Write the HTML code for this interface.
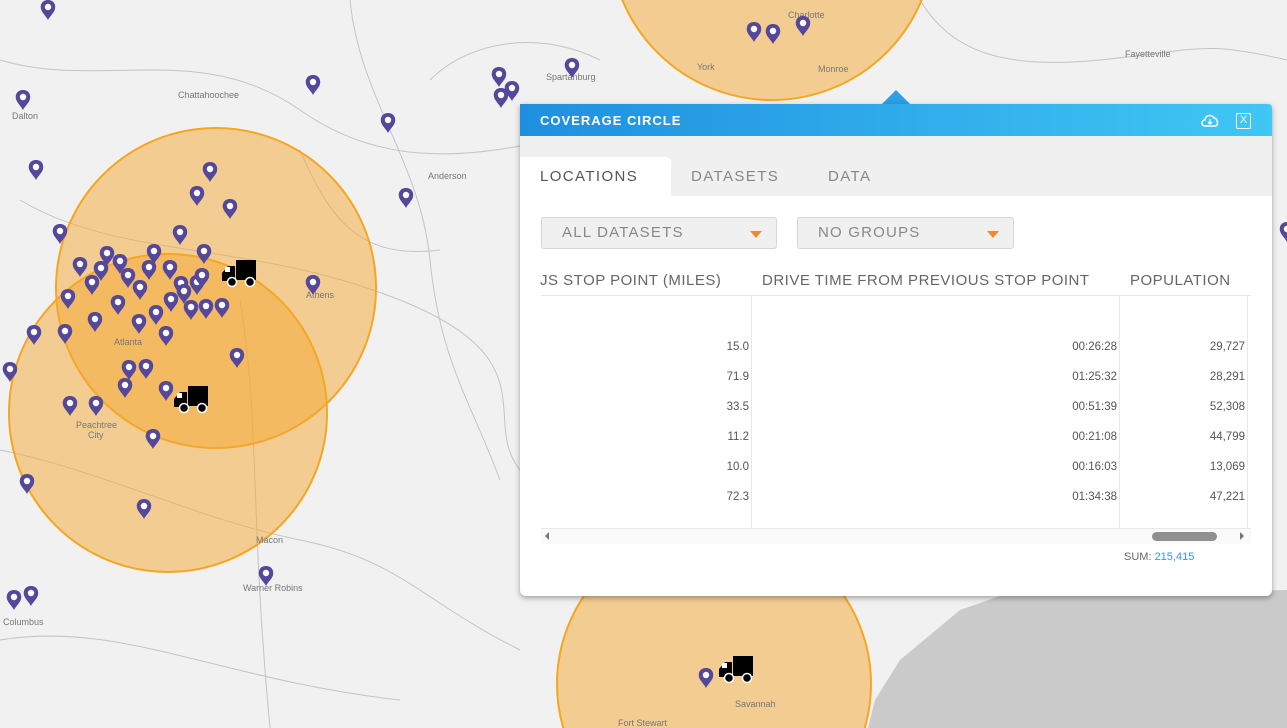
<!DOCTYPE html>
<html><head><meta charset="utf-8"><style>
*{margin:0;padding:0;box-sizing:border-box}
html,body{width:1287px;height:728px;overflow:hidden}
body{font-family:"Liberation Sans",sans-serif;background:#f1f1f1;position:relative}
#map{position:absolute;left:0;top:0;display:block}
.panel{position:absolute;left:520px;top:104px;width:752px;height:492px;background:#fff;border-radius:0 4px 6px 6px;box-shadow:0 2px 6px rgba(0,0,0,.35);overflow:hidden}
.hdr{height:32px;background:linear-gradient(90deg,#1f8fe0,#40c7f4);color:#fff;font-weight:bold;font-size:13px;letter-spacing:1px;line-height:33px;padding-left:20px;position:relative}
.tabs{height:60px;background:#f0f0f0;position:relative}
.tab{position:absolute;top:21px;height:40px;line-height:40px;font-size:15px;letter-spacing:1.4px;color:#888}
.tab.act{left:0;width:151px;background:#fff;color:#555;padding-left:20px;border-radius:0 6px 0 0}
.sel{position:absolute;top:113px;height:32px;background:#f0f0f0;border:1px solid #d6d6d6;border-radius:3px;font-size:15px;letter-spacing:1.2px;color:#888;line-height:30px;padding-left:20px}
.sel:after{content:"";position:absolute;right:14px;top:13px;border-left:6px solid transparent;border-right:6px solid transparent;border-top:7px solid #f08a24}
.th{position:absolute;top:168px;font-size:15px;letter-spacing:.5px;color:#666}
.vl{position:absolute;top:192px;width:1px;height:232px;background:#e8e8e8}
.num{position:absolute;font-size:11.5px;color:#555;text-align:right}
</style></head><body>
<svg id="map" width="1287" height="728" viewBox="0 0 1287 728">
<defs>
<g id="pin"><path d="M0 -18 C-6 -18 -8 -13 -7 -9 C-6 -5 -2 -2 0 2 C2 -2 6 -5 7 -9 C8 -13 6 -18 0 -18Z" fill="#55489a"/><circle cx="0" cy="-11" r="3.2" fill="#fff"/></g>
<g id="truck"><rect x="-16" y="-12" width="20" height="20" fill="#000"/><path d="M-17 -6 h-7 l-6 7 v8 h13z" fill="#000"/><rect x="-27" y="-5" width="5" height="5" fill="#fff"/><circle cx="-20" cy="10" r="4.5" fill="#000" stroke="#fff" stroke-width="1.5"/><circle cx="-2" cy="10" r="4.5" fill="#000" stroke="#fff" stroke-width="1.5"/></g>
</defs>
<rect width="1287" height="728" fill="#f1f1f1"/>
<path d="M1287 590 L1000 596 L960 610 L900 660 L875 700 L868 728 L1287 728Z" fill="#cacaca"/>
<g stroke="#c4c4c4" stroke-width="1" fill="none">
<path d="M0 60 C100 90 200 40 300 110 S500 150 600 130"/>
<path d="M20 200 C120 260 250 240 400 300 S480 420 520 470"/>
<path d="M350 0 C360 100 420 160 430 260 S470 400 500 480"/>
<path d="M0 450 C100 470 200 520 300 540 S420 600 520 650"/>
<path d="M240 300 C260 420 250 520 270 728"/>
<path d="M0 640 C120 620 220 680 400 700"/>
<path d="M430 80 C470 40 540 30 600 60"/>
<path d="M920 0 C950 50 1000 70 1100 60 S1200 40 1287 60"/>
<path d="M300 150 C330 220 360 260 440 250"/>
</g>
<g fill="rgba(244,168,50,0.5)" stroke="#f5a623" stroke-width="2">
<circle cx="772" cy="-62" r="162"/>
<circle cx="216" cy="288" r="160"/>
<circle cx="168" cy="413" r="159"/>
<circle cx="714" cy="684" r="157"/>
</g>
<g font-size="9" fill="#777" font-family="Liberation Sans">
<text x="12" y="119">Dalton</text><text x="428" y="179">Anderson</text><text x="1125" y="57">Fayetteville</text><text x="788" y="18">Charlotte</text><text x="818" y="72">Monroe</text><text x="697" y="70">York</text><text x="114" y="345">Atlanta</text><text x="306" y="298">Athens</text><text x="256" y="543">Macon</text><text x="243" y="591">Warner Robins</text><text x="3" y="625">Columbus</text><text x="735" y="707">Savannah</text><text x="618" y="726">Fort Stewart</text><text x="546" y="80">Spartanburg</text><text x="178" y="98">Chattahoochee</text><text x="76" y="428">Peachtree</text><text x="88" y="438">City</text>
</g>
<g>
<use href="#pin" x="48" y="18"/><use href="#pin" x="23" y="108"/><use href="#pin" x="313" y="93"/><use href="#pin" x="388" y="131"/><use href="#pin" x="36" y="178"/><use href="#pin" x="406" y="206"/><use href="#pin" x="499" y="85"/><use href="#pin" x="512" y="99"/><use href="#pin" x="501" y="106"/><use href="#pin" x="572" y="76"/><use href="#pin" x="754" y="40"/><use href="#pin" x="773" y="42"/><use href="#pin" x="803" y="34"/><use href="#pin" x="210" y="180"/><use href="#pin" x="197" y="204"/><use href="#pin" x="230" y="217"/><use href="#pin" x="180" y="243"/><use href="#pin" x="60" y="242"/><use href="#pin" x="107" y="264"/><use href="#pin" x="154" y="262"/><use href="#pin" x="204" y="262"/><use href="#pin" x="80" y="275"/><use href="#pin" x="101" y="279"/><use href="#pin" x="120" y="272"/><use href="#pin" x="128" y="286"/><use href="#pin" x="149" y="278"/><use href="#pin" x="170" y="278"/><use href="#pin" x="92" y="293"/><use href="#pin" x="140" y="298"/><use href="#pin" x="181" y="294"/><use href="#pin" x="197" y="293"/><use href="#pin" x="202" y="286"/><use href="#pin" x="68" y="307"/><use href="#pin" x="118" y="313"/><use href="#pin" x="171" y="310"/><use href="#pin" x="184" y="302"/><use href="#pin" x="191" y="318"/><use href="#pin" x="206" y="317"/><use href="#pin" x="222" y="316"/><use href="#pin" x="156" y="323"/><use href="#pin" x="139" y="332"/><use href="#pin" x="95" y="330"/><use href="#pin" x="65" y="342"/><use href="#pin" x="34" y="343"/><use href="#pin" x="166" y="344"/><use href="#pin" x="237" y="366"/><use href="#pin" x="10" y="380"/><use href="#pin" x="129" y="378"/><use href="#pin" x="146" y="377"/><use href="#pin" x="125" y="396"/><use href="#pin" x="166" y="399"/><use href="#pin" x="70" y="414"/><use href="#pin" x="96" y="414"/><use href="#pin" x="153" y="447"/><use href="#pin" x="27" y="492"/><use href="#pin" x="144" y="517"/><use href="#pin" x="266" y="584"/><use href="#pin" x="14" y="608"/><use href="#pin" x="31" y="604"/><use href="#pin" x="706" y="686"/><use href="#pin" x="313" y="293"/><use href="#pin" x="1287" y="240"/>
<use href="#truck" x="252" y="272"/><use href="#truck" x="204" y="398"/><use href="#truck" x="749" y="668"/>
</g>
<path d="M882 104 L896 90 L910 104Z" fill="#2d9ee6"/>
</svg>
<div class="panel">
<div class="hdr">COVERAGE CIRCLE
<svg style="position:absolute;left:680px;top:9px" width="20" height="16" viewBox="0 0 20 16"><path d="M5 13 C1 13 1 7 5 7 C5 2 12 1 14 5 C18 5 19 13 15 13Z" fill="none" stroke="#fff" stroke-width="1.5"/><path d="M10 6 v5 M8 9 l2 2 l2 -2" stroke="#fff" stroke-width="1.3" fill="none"/></svg>
<div style="position:absolute;left:716px;top:9px;width:15px;height:16px;border:1.5px solid #fff;border-radius:2px;font-size:11px;line-height:13px;text-align:center;font-weight:normal;letter-spacing:0">X</div>
</div>
<div class="tabs"><div class="tab act">LOCATIONS</div><div class="tab" style="left:171px">DATASETS</div><div class="tab" style="left:308px">DATA</div></div>
<div class="sel" style="left:21px;width:236px">ALL DATASETS</div>
<div class="sel" style="left:277px;width:217px">NO GROUPS</div>
<div class="th" style="left:20px">JS STOP POINT (MILES)</div>
<div class="th" style="left:242px">DRIVE TIME FROM PREVIOUS STOP POINT</div>
<div class="th" style="left:610px">POPULATION</div>
<div style="position:absolute;left:21px;top:191px;width:710px;height:1px;background:#e8e8e8"></div>
<div class="vl" style="left:231px"></div><div class="vl" style="left:599px"></div><div class="vl" style="left:727px"></div>
<div class="num" style="left:0;width:229px;top:228px;line-height:30px">15.0<br>71.9<br>33.5<br>11.2<br>10.0<br>72.3</div>
<div class="num" style="left:400px;width:197px;top:228px;line-height:30px">00:26:28<br>01:25:32<br>00:51:39<br>00:21:08<br>00:16:03<br>01:34:38</div>
<div class="num" style="left:600px;width:125px;top:228px;line-height:30px">29,727<br>28,291<br>52,308<br>44,799<br>13,069<br>47,221</div>
<div style="position:absolute;left:21px;top:424px;width:710px;height:1px;background:#e8e8e8"></div>
<div style="position:absolute;left:21px;top:425px;width:710px;height:15px;background:#fafafa"></div>
<div style="position:absolute;left:25px;top:428px;border-top:4px solid transparent;border-bottom:4px solid transparent;border-right:4px solid #777"></div>
<div style="position:absolute;left:720px;top:428px;border-top:4px solid transparent;border-bottom:4px solid transparent;border-left:4px solid #777"></div>
<div style="position:absolute;left:632px;top:428px;width:65px;height:9px;background:#909090;border-radius:5px"></div>
<div style="position:absolute;left:604px;top:447px;font-size:11px;color:#666">SUM: <span style="color:#2a9ae6">215,415</span></div>
</div>
</body></html>
